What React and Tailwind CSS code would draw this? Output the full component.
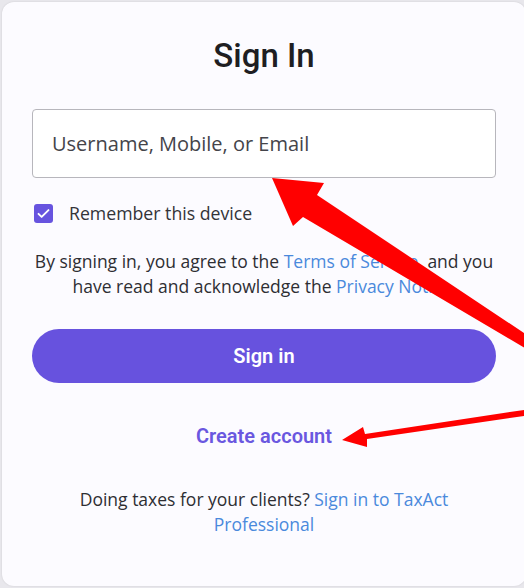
import React from "react";

const Arrows = () => {
  return (
    <svg className="absolute inset-0 pointer-events-none" width="524" height="588" viewBox="0 0 524 588">
      <polygon points="272,178 324,183 317,195 530,337 530,351 303,217 293,226" fill="#ff0000" />
      <polygon points="342,440 363,427 365,434 530,409 530,415 367,439 367,447" fill="#ff0000" />
    </svg>
  );
};

export default function App() {
  return (
    <div className="relative w-[524px] h-[588px] overflow-hidden bg-[#e8e7ec]">
      <div className="ml-[2px] mt-[2px] w-[524px] h-[584px] rounded-[12px] bg-[#fcfbff] px-[30px] pt-[34px] shadow-[0_0_2px_rgba(0,0,0,0.12)]">
        <h1 className="text-center text-[33px] leading-[40px] font-medium text-[#1e1e22] font-['Roboto',sans-serif]">Sign In</h1>

        <div className="mt-[33px] h-[69px] rounded-[4px] border border-[#b7b6bc] bg-white flex items-center px-[19px]">
          <span className="text-[20px] text-[#44444a] font-['Open_Sans',sans-serif]">Username, Mobile, or Email</span>
        </div>

        <label className="mt-[21px] flex items-center h-[28px] pl-[2px] gap-[16px] font-['Open_Sans',sans-serif]">
          <span className="w-[19px] h-[19px] rounded-[3px] bg-[#6753df] flex items-center justify-center">
            <svg width="15" height="15" viewBox="0 0 24 24" fill="none" stroke="white" strokeWidth="3" strokeLinecap="round" strokeLinejoin="round">
              <path d="M4 12.5l5 5L20 6.5" />
            </svg>
          </span>
          <span className="text-[17.7px] text-[#333338]">Remember this device</span>
        </label>

        <p className="mt-[22px] text-center text-[17.5px] leading-[25px] text-[#2e2e33] font-['Open_Sans',sans-serif]">
          By signing in, you agree to the <a className="text-[#4a89dc]">Terms of Service</a>, and you have read and acknowledge the{" "}
          <a className="text-[#4a89dc]">Privacy Notice</a>.
        </p>

        <button className="mt-[30px] w-full h-[54px] rounded-full bg-[#6752de] text-white text-[20px] font-semibold font-['Roboto',sans-serif]">Sign in</button>

        <div className="mt-[39px] h-[28px] flex items-center justify-center">
          <a className="text-[20px] font-semibold text-[#6a57e0] font-['Roboto',sans-serif]">Create account</a>
        </div>

        <p className="mt-[37px] text-center text-[17.5px] leading-[25px] text-[#2e2e33] font-['Open_Sans',sans-serif] px-[30px]">
          Doing taxes for your clients? <a className="text-[#4a89dc]">Sign in to TaxAct Professional</a>
        </p>
      </div>
      <Arrows />
    </div>
  );
}
